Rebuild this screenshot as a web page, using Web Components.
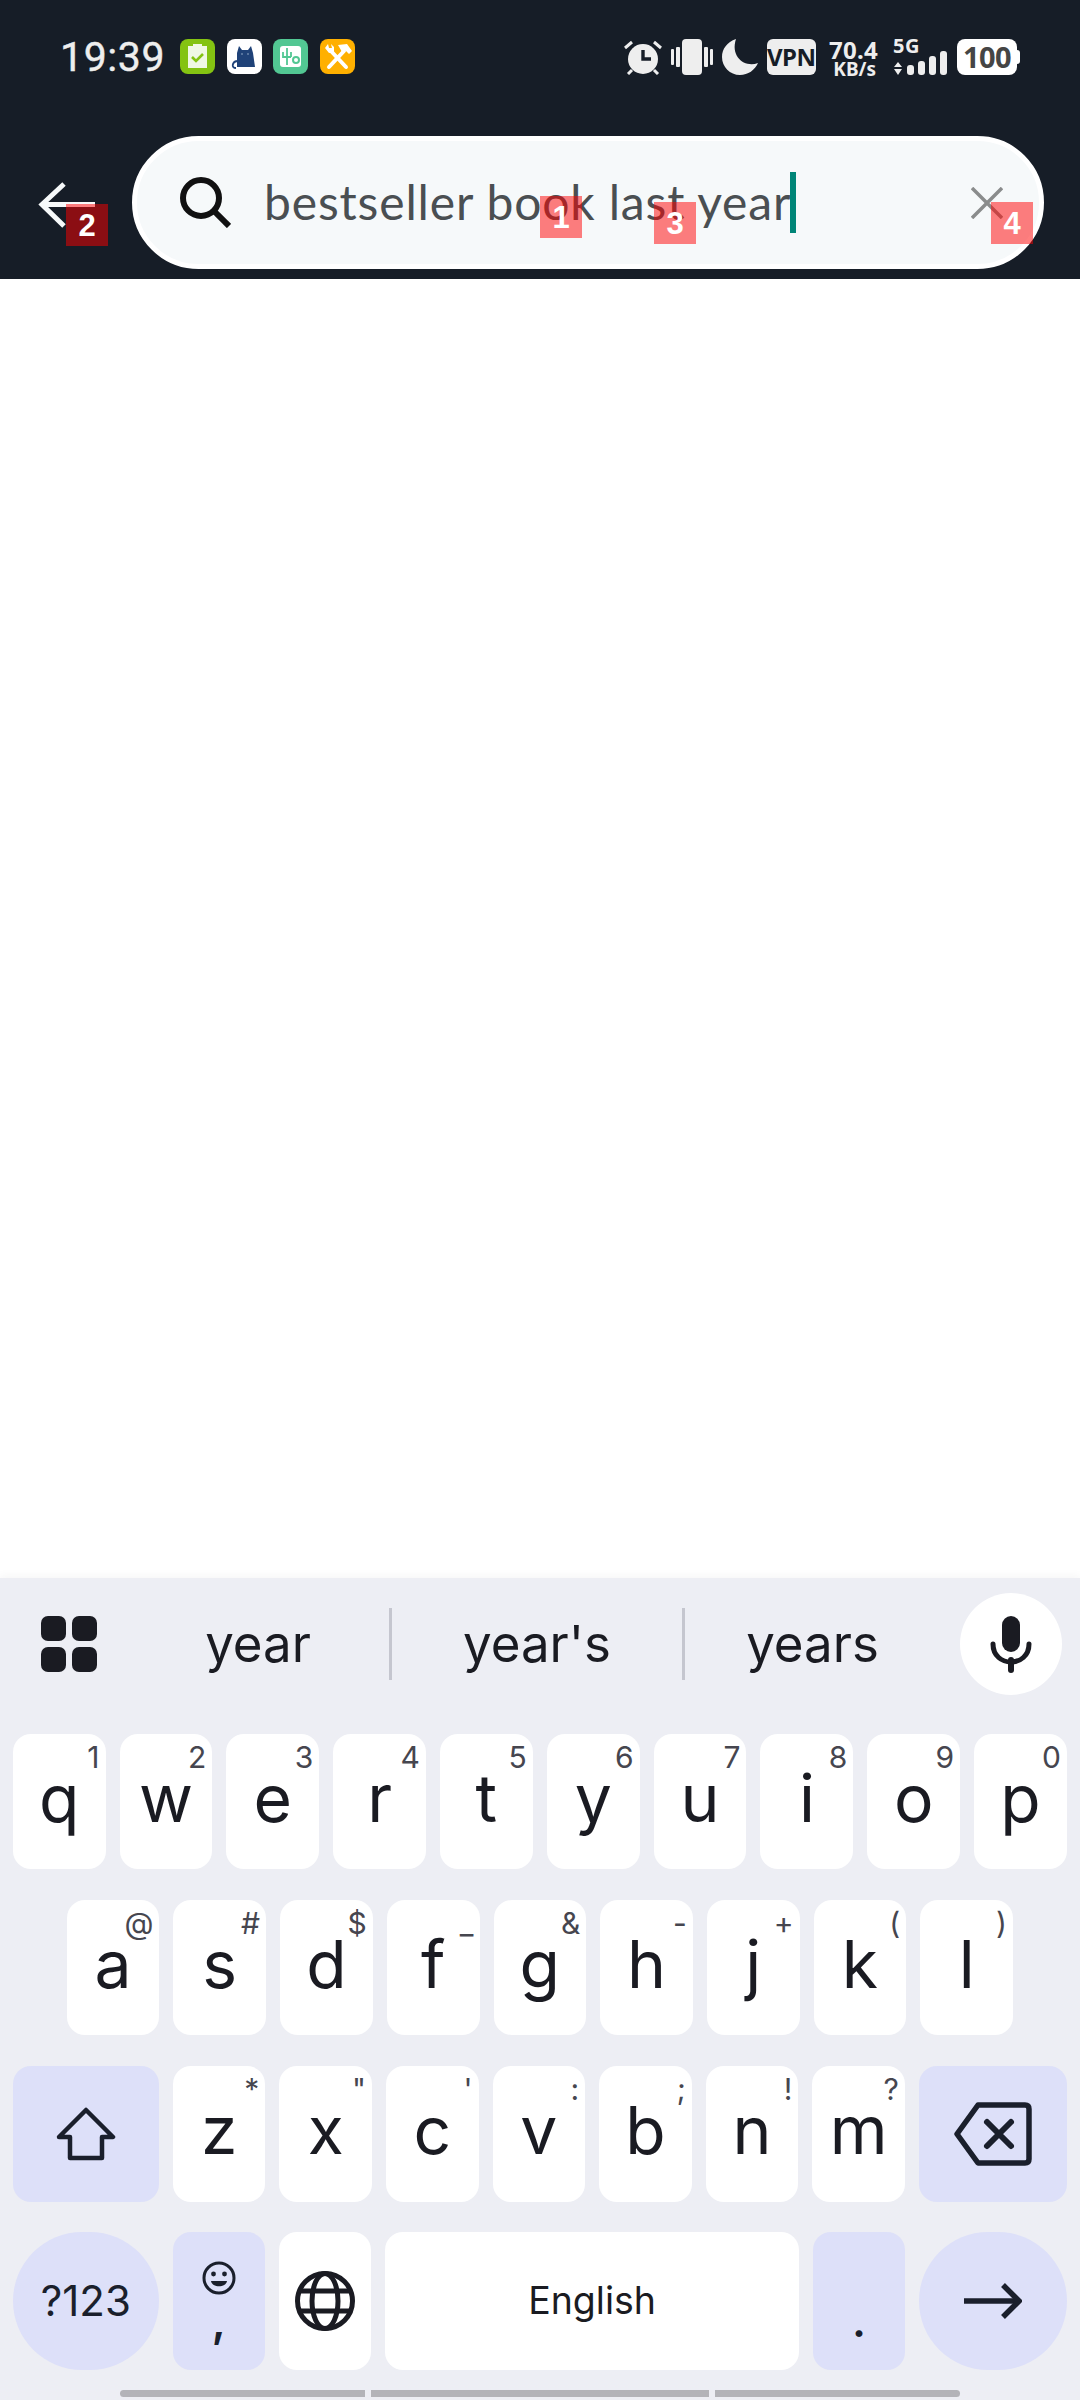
<!DOCTYPE html>
<html>
<head>
<meta charset="utf-8">
<title>search</title>
<style>
html, body { margin: 0; padding: 0; background: #fff; }
body { width: 1080px; height: 2400px; overflow: hidden; display: flex; flex-direction: column; font-family: "Inter", "Liberation Sans", sans-serif; }
</style>
</head>
<body>
<app-header>
  <status-bar></status-bar>
  <search-row text="bestseller book last year"></search-row>
  <mark-badge n="1" x="540" y="196"></mark-badge>
  <mark-badge n="2" x="66" y="204"></mark-badge>
  <mark-badge n="3" x="654" y="202"></mark-badge>
  <mark-badge n="4" x="991" y="202"></mark-badge>
</app-header>
<page-body></page-body>
<on-keyboard>
  <suggest-strip>
    <suggest-cell w="262">year</suggest-cell>
    <suggest-cell w="293" line>year's</suggest-cell>
    <suggest-cell w="258" line>years</suggest-cell>
  </suggest-strip>
  <kb-row h="135" pad="12.7" pad-end="13">
    <kb-key hint="1">q</kb-key><kb-key hint="2">w</kb-key><kb-key hint="3">e</kb-key><kb-key hint="4">r</kb-key><kb-key hint="5">t</kb-key>
    <kb-key hint="6">y</kb-key><kb-key hint="7">u</kb-key><kb-key hint="8">i</kb-key><kb-key hint="9">o</kb-key><kb-key hint="0">p</kb-key>
  </kb-row>
  <kb-row h="135.5" pad="66.7" pad-end="67">
    <kb-key hint="@">a</kb-key><kb-key hint="#">s</kb-key><kb-key hint="$">d</kb-key><kb-key hint="_">f</kb-key><kb-key hint="&amp;">g</kb-key>
    <kb-key hint="-">h</kb-key><kb-key hint="+">j</kb-key><kb-key hint="(">k</kb-key><kb-key hint=")">l</kb-key>
  </kb-row>
  <kb-row h="136" pad="13" pad-end="13">
    <kb-key mod icon grow="1.575">
      <svg width="60" height="56" viewBox="0 0 60 56"><path d="M30 4 L57 31 H46 V52 H14 V31 H3 Z" fill="none" stroke="#1a1f2c" stroke-width="4.5" stroke-linejoin="round"/></svg>
    </kb-key>
    <kb-key hint="*">z</kb-key><kb-key hint="&quot;">x</kb-key><kb-key hint="'">c</kb-key><kb-key hint=":">v</kb-key>
    <kb-key hint=";">b</kb-key><kb-key hint="!">n</kb-key><kb-key hint="?">m</kb-key>
    <kb-key mod icon grow="1.6">
      <svg width="78" height="64" viewBox="0 0 78 64"><path d="M3 32 L24 3 H71 Q75 3 75 7 V57 Q75 61 71 61 H24 Z" fill="none" stroke="#1a1f2c" stroke-width="5.5" stroke-linejoin="round"/><path d="M33 20 L57 44 M57 20 L33 44" stroke="#1a1f2c" stroke-width="6" stroke-linecap="round"/></svg>
    </kb-key>
  </kb-row>
  <kb-row h="138" pad="13" pad-end="13">
    <kb-key mod round icon grow="1.575"><span class="sym">?123</span></kb-key>
    <kb-key mod icon>
      <emoji-comma></emoji-comma>
    </kb-key>
    <kb-key icon>
      <svg width="60" height="60" viewBox="0 0 60 60" fill="none" stroke="#1a1b22" stroke-width="5"><circle cx="30" cy="30" r="27.5"/><ellipse cx="30" cy="30" rx="13" ry="27.5"/><path d="M3 20 H57 M3 40 H57"/></svg>
    </kb-key>
    <kb-key icon grow="4.47"><span class="space">English</span></kb-key>
    <kb-key mod icon><span class="dot">.</span></kb-key>
    <kb-key mod round icon grow="1.6">
      <svg width="58" height="36" viewBox="0 0 58 36" fill="none" stroke="#1a1f2c" stroke-width="5.5"><path d="M0 18 H54"/><path d="M39 2 L55 18 L39 34"/></svg>
    </kb-key>
  </kb-row>
  <nav-pill></nav-pill>
</on-keyboard>

<script>
// small helper, every element gets an open shadow root from a string
function mount(el, html) {
    el.attachShadow({ mode: 'open' }).innerHTML = html;
}

customElements.define('app-header', class extends HTMLElement {
    constructor() {
        super();
        mount(this, `<style>
        :host { display: block; position: relative; height: 279px; background: #161d27; flex: none; }
        </style><slot></slot>`);
    }
});

customElements.define('status-bar', class extends HTMLElement {
    constructor() {
        super();
        mount(this, `<style>
        :host { display: flex; align-items: flex-start; height: 36px; padding: 39px 60px 0 60px; color: #eee; font-family: "Noto Sans", sans-serif; }
        .time { font: 400 41px/36px Roboto, sans-serif; color: #eee; width: 120px; letter-spacing: .6px; -webkit-text-stroke: .4px #eee; }
        .apps { display: flex; gap: 11.5px; }
        .apps svg { display: block; }
        .right { margin-left: auto; display: flex; align-items: flex-start; }
        .right svg { display: block; }
        .vpn { width: 49.5px; height: 36px; margin-left: 9px; background: #eee; color: #161d27; border-radius: 6px; font: 700 24px/36px "Noto Sans", sans-serif; text-align: center; letter-spacing: -.5px; }
        .speed { width: 47px; margin-left: 13px; font-weight: 700; text-align: right; }
        .speed div:first-child { font-size: 24px; line-height: 22px; letter-spacing: .3px; }
        .speed div:last-child { font-size: 19px; line-height: 17px; }
        .sig { width: 54px; margin-left: 17px; height: 36px; }
        .sig div { font: 700 20px/14px "Noto Sans", sans-serif; letter-spacing: .5px; }
        .sig svg { margin-top: -2px; }
        .batt { display: flex; align-items: center; margin-left: 10px; }
        .batt div { width: 60px; height: 36px; background: #fff; border-radius: 8px; color: #454545; font: 700 29px/36px "Noto Sans", sans-serif; text-align: center; letter-spacing: -.6px; }
        .batt i { display: block; width: 3px; height: 14px; background: #fff; border-radius: 0 3px 3px 0; }
        </style>
        <div class="time">19:39</div>
        <div class="apps">
          <svg width="35" height="35" viewBox="0 0 35 35"><rect width="35" height="35" rx="8" fill="#84c312"/><path d="M8 7 H13 V5 H22 V7 H27 V29 H8 Z" fill="#f0f8e4"/><path d="M12 18 L16 22 L23 15" fill="none" stroke="#84c312" stroke-width="2.6"/></svg>
          <svg width="35" height="35" viewBox="0 0 35 35"><rect width="35" height="35" rx="8" fill="#fff"/><path d="M12 7 L15 11 H21 L24 7 L26 14 L28 28 H10 L10 14 Z" fill="#1f4278"/><path d="M10 22 C5 23 4 29 9 29" fill="none" stroke="#1f4278" stroke-width="1.8"/><circle cx="15" cy="15" r=".8" fill="#9db3d0"/><circle cx="21" cy="15" r=".8" fill="#9db3d0"/></svg>
          <svg width="35" height="35" viewBox="0 0 35 35"><rect width="35" height="35" rx="8" fill="#52c793"/><rect x="7" y="7" width="21" height="21" rx="3" fill="#fff"/><path d="M14 9 V26 M10 13 V18 H18 M18 13 V18" fill="none" stroke="#52c793" stroke-width="1.8"/><circle cx="23" cy="21" r="3" fill="none" stroke="#52c793" stroke-width="2"/></svg>
          <svg width="35" height="35" viewBox="0 0 35 35"><rect width="35" height="35" rx="8" fill="#ffb000"/><path d="M10 11 L26 28" stroke="#fff" stroke-width="4" stroke-linecap="round"/><path d="M24 12 L9 28" stroke="#fff" stroke-width="4" stroke-linecap="round"/><path d="M5 9 L8 5 L9 9 L12 9 L11 5 L14 8 L14 13 L9 14 Z" fill="#fff"/><path d="M18 6 L27 5 L32 12 L29 15 L25 11 L22 13 Z" fill="#fff"/></svg>
        </div>
        <div class="right">
          <svg width="38" height="36" viewBox="0 0 38 36"><circle cx="19" cy="20" r="15" fill="#eee"/><path d="M19 11 V20 H27" fill="none" stroke="#161d27" stroke-width="3.4"/><path d="M1 9 L8 3 M30 3 L37 9 M4 35 L8 31 M34 35 L30 31" stroke="#eee" stroke-width="3"/></svg>
          <svg width="42" height="36" viewBox="0 0 42 36" style="margin-left:9px" fill="#eee"><rect x="11" width="20" height="36" rx="4"/><rect y="10" width="3" height="16" rx="1"/><rect x="5" y="8" width="4" height="20" rx="1"/><rect x="33" y="8" width="4" height="20" rx="1"/><rect x="39" y="10" width="3" height="16" rx="1"/></svg>
          <svg width="36" height="36" viewBox="0 0 36 36" style="margin-left:9px"><path d="M14 0 C5 3 0 10 0 18 C0 28 8 36 18 36 C26 36 33 31 36 24 C23 29 8 18 14 0 Z" fill="#eee"/></svg>
          <div class="vpn">VPN</div>
          <div class="speed"><div>70.4</div><div>KB/s</div></div>
          <div class="sig"><div>5G</div>
            <svg width="54" height="24" viewBox="0 0 54 24" fill="#eee"><path d="M5 11 L9 16 H1 Z M5 24 L1 18 H9 Z"/><rect x="14" y="14" width="7" height="10" rx="3"/><rect x="25" y="10" width="7" height="14" rx="3"/><rect x="36" y="5" width="7" height="19" rx="3"/><rect x="47" y="0" width="7" height="24" rx="3"/></svg>
          </div>
          <div class="batt"><div>100</div><i></i></div>
        </div>`);
    }
});

customElements.define('search-row', class extends HTMLElement {
    constructor() {
        super();
        var text = this.getAttribute('text');
        mount(this, `<style>
        :host { display: flex; align-items: center; padding: 61px 36px 0 38px; }
        .back { display: block; flex: none; margin-top: 4px; margin-right: 37px; }
        .bar { flex: 1; height: 123px; background: #f6f9fa; border: 5px solid #fff; border-radius: 67px; display: flex; align-items: center; padding: 0 36px 0 43px; }
        .bar > svg { display: block; flex: none; }
        .txt { margin-left: 33px; font: 400 48px/60px Lato, sans-serif; letter-spacing: .85px; color: #4a4f52; white-space: nowrap; margin-top: -2px; }
        .caret { width: 6px; height: 61px; background: #008577; margin-left: -1px; flex: none; }
        .clear { margin-left: auto; }
        </style>
        <svg class="back" width="57" height="46" viewBox="0 0 57 46" fill="none" stroke="#f6f9fa" stroke-width="5"><path d="M57 22.5 H4"/><path d="M26 2 L4 22.5 L26 44"/></svg>
        <div class="bar">
          <svg width="51" height="51" viewBox="0 0 51 51" fill="none" stroke="#111" stroke-width="6"><circle cx="21" cy="21" r="18"/><path d="M33 33 L49 49"/></svg>
          <span class="txt">${text}</span><span class="caret"></span>
          <svg class="clear" width="32" height="32" viewBox="0 0 32 32" stroke="#8a8c8c" stroke-width="3.5"><path d="M1 1 L31 31 M31 1 L1 31"/></svg>
        </div>`);
    }
});

// numbered overlay squares, sit on top of the header
customElements.define('mark-badge', class extends HTMLElement {
    constructor() {
        super();
        mount(this, `<style>
        :host { position: absolute; left: ${this.getAttribute('x')}px; top: ${this.getAttribute('y')}px; width: 42px; height: 42px; background: rgba(255,0,0,.5); color: #fff; font: 700 31px/44px "Liberation Sans", sans-serif; text-align: center; }
        </style>${this.getAttribute('n')}`);
    }
});

customElements.define('page-body', class extends HTMLElement {
    constructor() {
        super();
        mount(this, `<style>:host { display: block; flex: 1; background: #fff; }</style>`);
    }
});

customElements.define('on-keyboard', class extends HTMLElement {
    constructor() {
        super();
        mount(this, `<style>
        :host { display: flex; flex-direction: column; gap: 30.5px; flex: none; background: #edeef4; box-shadow: 0 -3px 8px rgba(0,0,0,.035); }
        </style><slot></slot>`);
    }
});

customElements.define('suggest-strip', class extends HTMLElement {
    constructor() {
        super();
        mount(this, `<style>
        :host { display: flex; align-items: center; box-sizing: border-box; height: 156px; margin-bottom: -30.5px; padding: 0 0 24px 41px; }
        .grid { flex: none; display: grid; grid-template-columns: 25px 25px; grid-template-rows: 25px 25px; gap: 6px; margin-right: 30px; }
        .grid i { background: #1a1b22; border-radius: 7px; }
        .mic { flex: none; width: 102px; height: 102px; border-radius: 50%; background: #fff; margin-left: auto; margin-right: 18px; display: flex; align-items: center; justify-content: center; }
        .mic svg { display: block; }
        </style>
        <div class="grid"><i></i><i></i><i></i><i></i></div>
        <slot></slot>
        <div class="mic"><svg width="42" height="57" viewBox="0 0 42 57"><rect x="12" y="0" width="18" height="36" rx="9" fill="#1a1b22"/><path d="M3 28 C3 52 39 52 39 28" fill="none" stroke="#1a1b22" stroke-width="5" stroke-linecap="round"/><path d="M21 44 V54" stroke="#1a1b22" stroke-width="6" stroke-linecap="round"/></svg></div>`);
    }
});

customElements.define('suggest-cell', class extends HTMLElement {
    constructor() {
        super();
        mount(this, `<style>
        :host { display: flex; align-items: center; justify-content: center; box-sizing: border-box; width: ${this.getAttribute('w')}px; height: 72px; flex: none; font: 400 51px/72px Inter, sans-serif; color: #1a1b22; ${this.hasAttribute('line') ? 'border-left: 3px solid #c5c6cf;' : ''} }
        </style><slot></slot>`);
    }
});

customElements.define('kb-row', class extends HTMLElement {
    constructor() {
        super();
        mount(this, `<style>
        :host { display: flex; gap: 14px; height: ${this.getAttribute('h')}px; padding: 0 ${this.getAttribute('pad-end')}px 0 ${this.getAttribute('pad')}px; }
        </style><slot></slot>`);
    }
});

customElements.define('kb-key', class extends HTMLElement {
    constructor() {
        super();
        var hint = this.getAttribute('hint');
        var mod = this.hasAttribute('mod');
        var round = this.hasAttribute('round');
        var icon = this.hasAttribute('icon');
        var grow = this.getAttribute('grow') || 1;
        var html = `<style>
        :host { position: relative; display: flex; justify-content: center; align-items: ${icon ? 'center' : 'flex-start'}; flex: ${grow} 1 0; min-width: 0;
          background: ${mod ? '#dde0f9' : '#fff'}; border-radius: ${round ? '69px' : '18px'}; color: #1a1b22; font: 400 66px/128px Inter, sans-serif; }
        .hint { position: absolute; top: 0; right: 6px; font: 400 30px/46px Inter, sans-serif; color: #46464f; }
        ::slotted(.sym) { font: 400 42px/50px Inter, sans-serif; color: #1a1f2c; }
        ::slotted(.space) { font: 400 37.5px/50px Inter, sans-serif; color: #1a1b22; }
        ::slotted(.dot) { font: 600 44px/50px Inter, sans-serif; color: #1a1f2c; margin-top: 40px; }
        </style><slot></slot>`;
        if (hint) {
            var safe = hint.replace(/&/g, '&amp;').replace(/</g, '&lt;');
            html += `<span class="hint">${safe}</span>`;
        }
        mount(this, html);
    }
});

customElements.define('emoji-comma', class extends HTMLElement {
    constructor() {
        super();
        mount(this, `<style>
        :host { display: flex; flex-direction: column; align-items: center; gap: 6px; color: #1a1f2c; font: 600 44px/40px Inter, sans-serif; }
        svg { display: block; }
        </style>
        <svg width="34" height="34" viewBox="0 0 34 34"><circle cx="17" cy="17" r="15" fill="none" stroke="#1a1f2c" stroke-width="3"/><circle cx="11.5" cy="13" r="2.4" fill="#1a1f2c"/><circle cx="22.5" cy="13" r="2.4" fill="#1a1f2c"/><path d="M9 20 H25 C24 27 10 27 9 20 Z" fill="#1a1f2c"/></svg>
        <span>,</span>`);
    }
});

customElements.define('nav-pill', class extends HTMLElement {
    constructor() {
        super();
        mount(this, `<style>
        :host { display: flex; gap: 6px; margin: -10.5px 120px 3px 120px; height: 7px; }
        i { display: block; background: #b3b3b8; height: 7px; }
        </style>
        <i style="width:245px;border-radius:4px 0 0 4px"></i>
        <i style="width:338px"></i>
        <i style="width:245px;border-radius:0 4px 4px 0"></i>`);
    }
});
</script>
</body>
</html>
